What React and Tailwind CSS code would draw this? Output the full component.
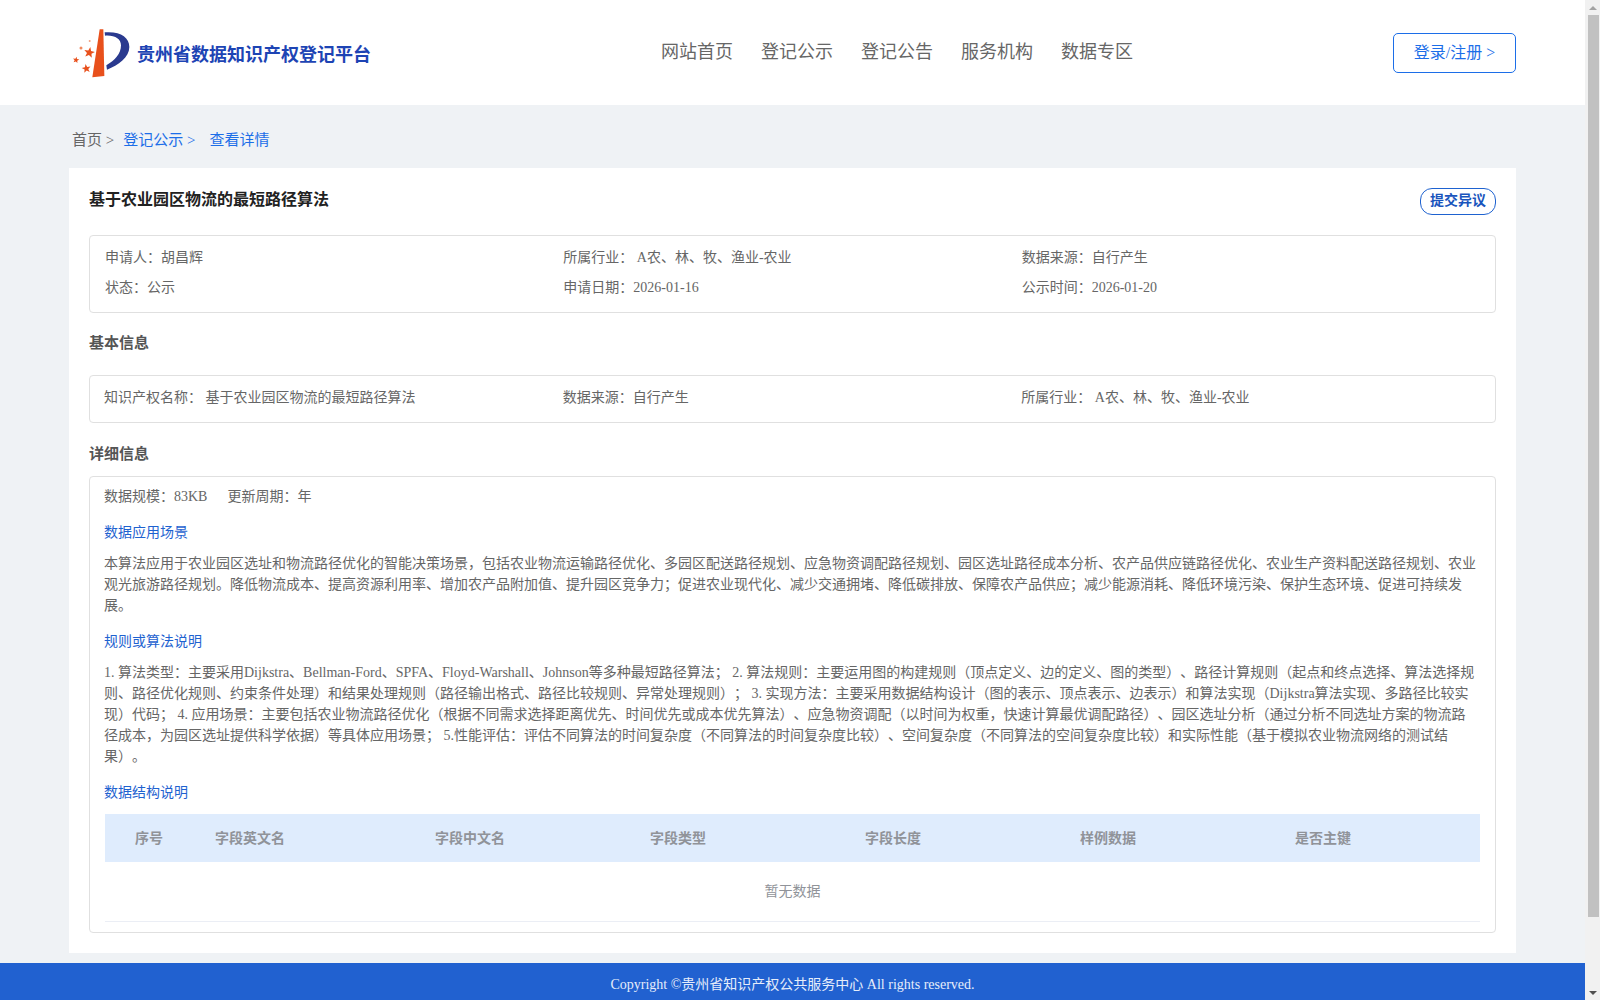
import React from "react";

const font = { fontFamily: '"Liberation Serif", "Noto Sans CJK SC", serif' };

const starPoints = (cx, cy, r, rot = 0) => {
  const pts = [];
  for (let i = 0; i < 10; i++) {
    const rad = i % 2 === 0 ? r : r * 0.42;
    const a = ((-90 + rot + i * 36) * Math.PI) / 180;
    pts.push(`${cx + rad * Math.cos(a)},${cy + rad * Math.sin(a)}`);
  }
  return pts.join(" ");
};

const Logo = () => (
  <svg viewBox="60 50 180 156" className="w-[60px] h-[52px] shrink-0">
    <polygon points="149,57 160,57 163,197 127,201" fill="#e8501c" />
    <path
      d="M164,66 C210,62 238,80 238,110 C238,140 205,165 171,178 L169,165 C195,150 213,130 213,105 C213,86 195,74 165,76 Z"
      fill="#2a3a8f"
    />
    <polygon points={starPoints(118, 127, 17, 10)} fill="#e8501c" />
    <polygon points={starPoints(109, 175, 14, -10)} fill="#e8501c" />
    <polygon points={starPoints(78, 149, 10, 10)} fill="#e8501c" />
    <circle cx="93" cy="113" r="4.5" fill="#f08a60" />
    <circle cx="119" cy="92" r="3" fill="#f2a080" />
  </svg>
);

const navItems = ["网站首页", "登记公示", "登记公告", "服务机构", "数据专区"];
const columns = ["序号", "字段英文名", "字段中文名", "字段类型", "字段长度", "样例数据", "是否主键"];

const Field = ({ label, value }) => (
  <div className="whitespace-nowrap">
    {label}
    {value}
  </div>
);

const SectionLink = ({ children, className }) => (
  <div className={`text-[#1e62d0] text-[14px] leading-[21px] ${className}`}>{children}</div>
);

const App = () => {
  return (
    <div className="flex h-screen w-full overflow-hidden bg-[#eff2f5] [text-spacing-trim:space-all]" style={font}>
      <div className="w-[1585px] h-[1000px] overflow-hidden shrink-0 flex flex-col">
        {/* header */}
        <header className="h-[105px] bg-white flex items-center shrink-0 pl-[70px] pr-[69px]">
          <div className="flex items-center w-[591px] shrink-0 pt-[1px]">
            <Logo />
            <span className="ml-[7px] mt-[4px] text-[18px] font-bold text-[#1d44b4] whitespace-nowrap">
              贵州省数据知识产权登记平台
            </span>
          </div>
          <nav className="flex gap-[28px] text-[18px] text-[#666666] -mt-[1px]">
            {navItems.map((item) => (
              <a key={item} className="whitespace-nowrap">
                {item}
              </a>
            ))}
          </nav>
          <button className="ml-auto w-[123px] h-[40px] mt-[1px] rounded-[5px] border border-[#1c6ee8] text-[#1c6ee8] text-[16px] bg-white">
            登录/注册 &gt;
          </button>
        </header>

        {/* breadcrumb */}
        <div className="h-[63px] shrink-0 flex items-center pl-[72px] pt-[7px] text-[15px] whitespace-nowrap">
          <span className="text-[#666666]">首页 &gt;</span>
          <span className="ml-[9px] text-[#1c6ee8]">登记公示 &gt;</span>
          <span className="ml-[14px] text-[#1c6ee8]">查看详情</span>
        </div>

        {/* card */}
        <main className="mx-[69px] w-[1447px] h-[785px] shrink-0 bg-white px-[20px] text-[14px] text-[#666666]">
          <div className="flex items-start justify-between h-[67px]">
            <h1 className="mt-[20px] text-[16px] leading-[24px] font-bold text-[#222222]">
              基于农业园区物流的最短路径算法
            </h1>
            <button className="mt-[20px] w-[76px] h-[27px] pb-[2px] rounded-[12px] border border-[#1e62d0] text-[#1a55bd] text-[14px] font-bold">
              提交异议
            </button>
          </div>

          <div className="h-[78px] border border-[#e0e0e0] rounded-[4px] px-[15px] pt-[6px] grid grid-cols-3 grid-rows-[30px_30px] items-center">
            <Field label="申请人：" value="胡昌辉" />
            <Field label="所属行业： " value="A农、林、牧、渔业-农业" />
            <Field label="数据来源：" value="自行产生" />
            <Field label="状态：" value="公示" />
            <Field label="申请日期：" value="2026-01-16" />
            <Field label="公示时间：" value="2026-01-20" />
          </div>

          <h2 className="mt-[19px] text-[15px] leading-[22px] font-bold text-[#555555]">基本信息</h2>

          <div className="mt-[21px] h-[48px] border border-[#e0e0e0] rounded-[4px] pl-[14px] pr-[15px] pb-[3px] grid grid-cols-3 items-center">
            <Field label="知识产权名称： " value="基于农业园区物流的最短路径算法" />
            <Field label="数据来源：" value="自行产生" />
            <Field label="所属行业： " value="A农、林、牧、渔业-农业" />
          </div>

          <h2 className="mt-[20px] text-[15px] leading-[22px] font-bold text-[#555555]">详细信息</h2>

          <div className="mt-[11px] h-[457px] border border-[#e0e0e0] rounded-[4px] pl-[14px] pr-[16px] flex flex-col">
            <div className="mt-[9px] leading-[21px] whitespace-nowrap">
              数据规模：83KB<span className="ml-[20px]">更新周期：年</span>
            </div>
            <SectionLink className="mt-[15px]">数据应用场景</SectionLink>
            <p className="mt-[10px] leading-[21px]">
              本算法应用于农业园区选址和物流路径优化的智能决策场景，包括农业物流运输路径优化、多园区配送路径规划、应急物资调配路径规划、园区选址路径成本分析、农产品供应链路径优化、农业生产资料配送路径规划、农业观光旅游路径规划。降低物流成本、提高资源利用率、增加农产品附加值、提升园区竞争力；促进农业现代化、减少交通拥堵、降低碳排放、保障农产品供应；减少能源消耗、降低环境污染、保护生态环境、促进可持续发展。
            </p>
            <SectionLink className="mt-[15px]">规则或算法说明</SectionLink>
            <p className="mt-[10px] leading-[21px]">
              1. 算法类型：主要采用Dijkstra、Bellman-Ford、SPFA、Floyd-Warshall、Johnson等多种最短路径算法； 2. 算法规则：主要运用图的构建规则（顶点定义、边的定义、图的类型）、路径计算规则（起点和终点选择、算法选择规则、路径优化规则、约束条件处理）和结果处理规则（路径输出格式、路径比较规则、异常处理规则）； 3. 实现方法：主要采用数据结构设计（图的表示、顶点表示、边表示）和算法实现（Dijkstra算法实现、多路径比较实现）代码； 4. 应用场景：主要包括农业物流路径优化（根据不同需求选择距离优先、时间优先或成本优先算法）、应急物资调配（以时间为权重，快速计算最优调配路径）、园区选址分析（通过分析不同选址方案的物流路径成本，为园区选址提供科学依据）等具体应用场景； 5.性能评估：评估不同算法的时间复杂度（不同算法的时间复杂度比较）、空间复杂度（不同算法的空间复杂度比较）和实际性能（基于模拟农业物流网络的测试结果）。
            </p>
            <SectionLink className="mt-[15px]">数据结构说明</SectionLink>
            <div className="mt-[11px] ml-[1px] -mr-[1px]">
              <div className="h-[48px] bg-[#dfecfd] grid grid-cols-[110px_220px_215px_215px_215px_215px_1fr] items-center font-bold text-[#909399]">
                {columns.map((col, i) => (
                  <div key={col} className={i === 0 ? "pl-[30px]" : ""}>
                    {col}
                  </div>
                ))}
              </div>
              <div className="h-[60px] border-b border-[#ebeef5] flex items-center justify-center text-[#909399]">
                暂无数据
              </div>
            </div>
          </div>
        </main>

        {/* footer */}
        <footer className="mt-[10px] h-[37px] shrink-0 bg-[#2161d0] flex items-center justify-center pt-[6px] text-[14px] text-[#e6edfa]">
          Copyright ©贵州省知识产权公共服务中心 All rights reserved.
        </footer>
      </div>

      {/* scrollbar */}
      <div className="w-[15px] h-[1000px] shrink-0 bg-[#f1f1f1] flex flex-col items-center">
        <div className="h-[15px] shrink-0 flex items-center justify-center">
          <div className="w-0 h-0 border-x-[4px] border-x-transparent border-b-[4px] border-b-[#a3a3a3]" />
        </div>
        <div className="w-[11px] h-[902px] ml-[1px] bg-[#c1c1c1]" />
        <div className="mt-auto h-[15px] shrink-0 flex items-center justify-center">
          <div className="w-0 h-0 border-x-[4px] border-x-transparent border-t-[4px] border-t-[#505050]" />
        </div>
      </div>
    </div>
  );
};

export default App;
